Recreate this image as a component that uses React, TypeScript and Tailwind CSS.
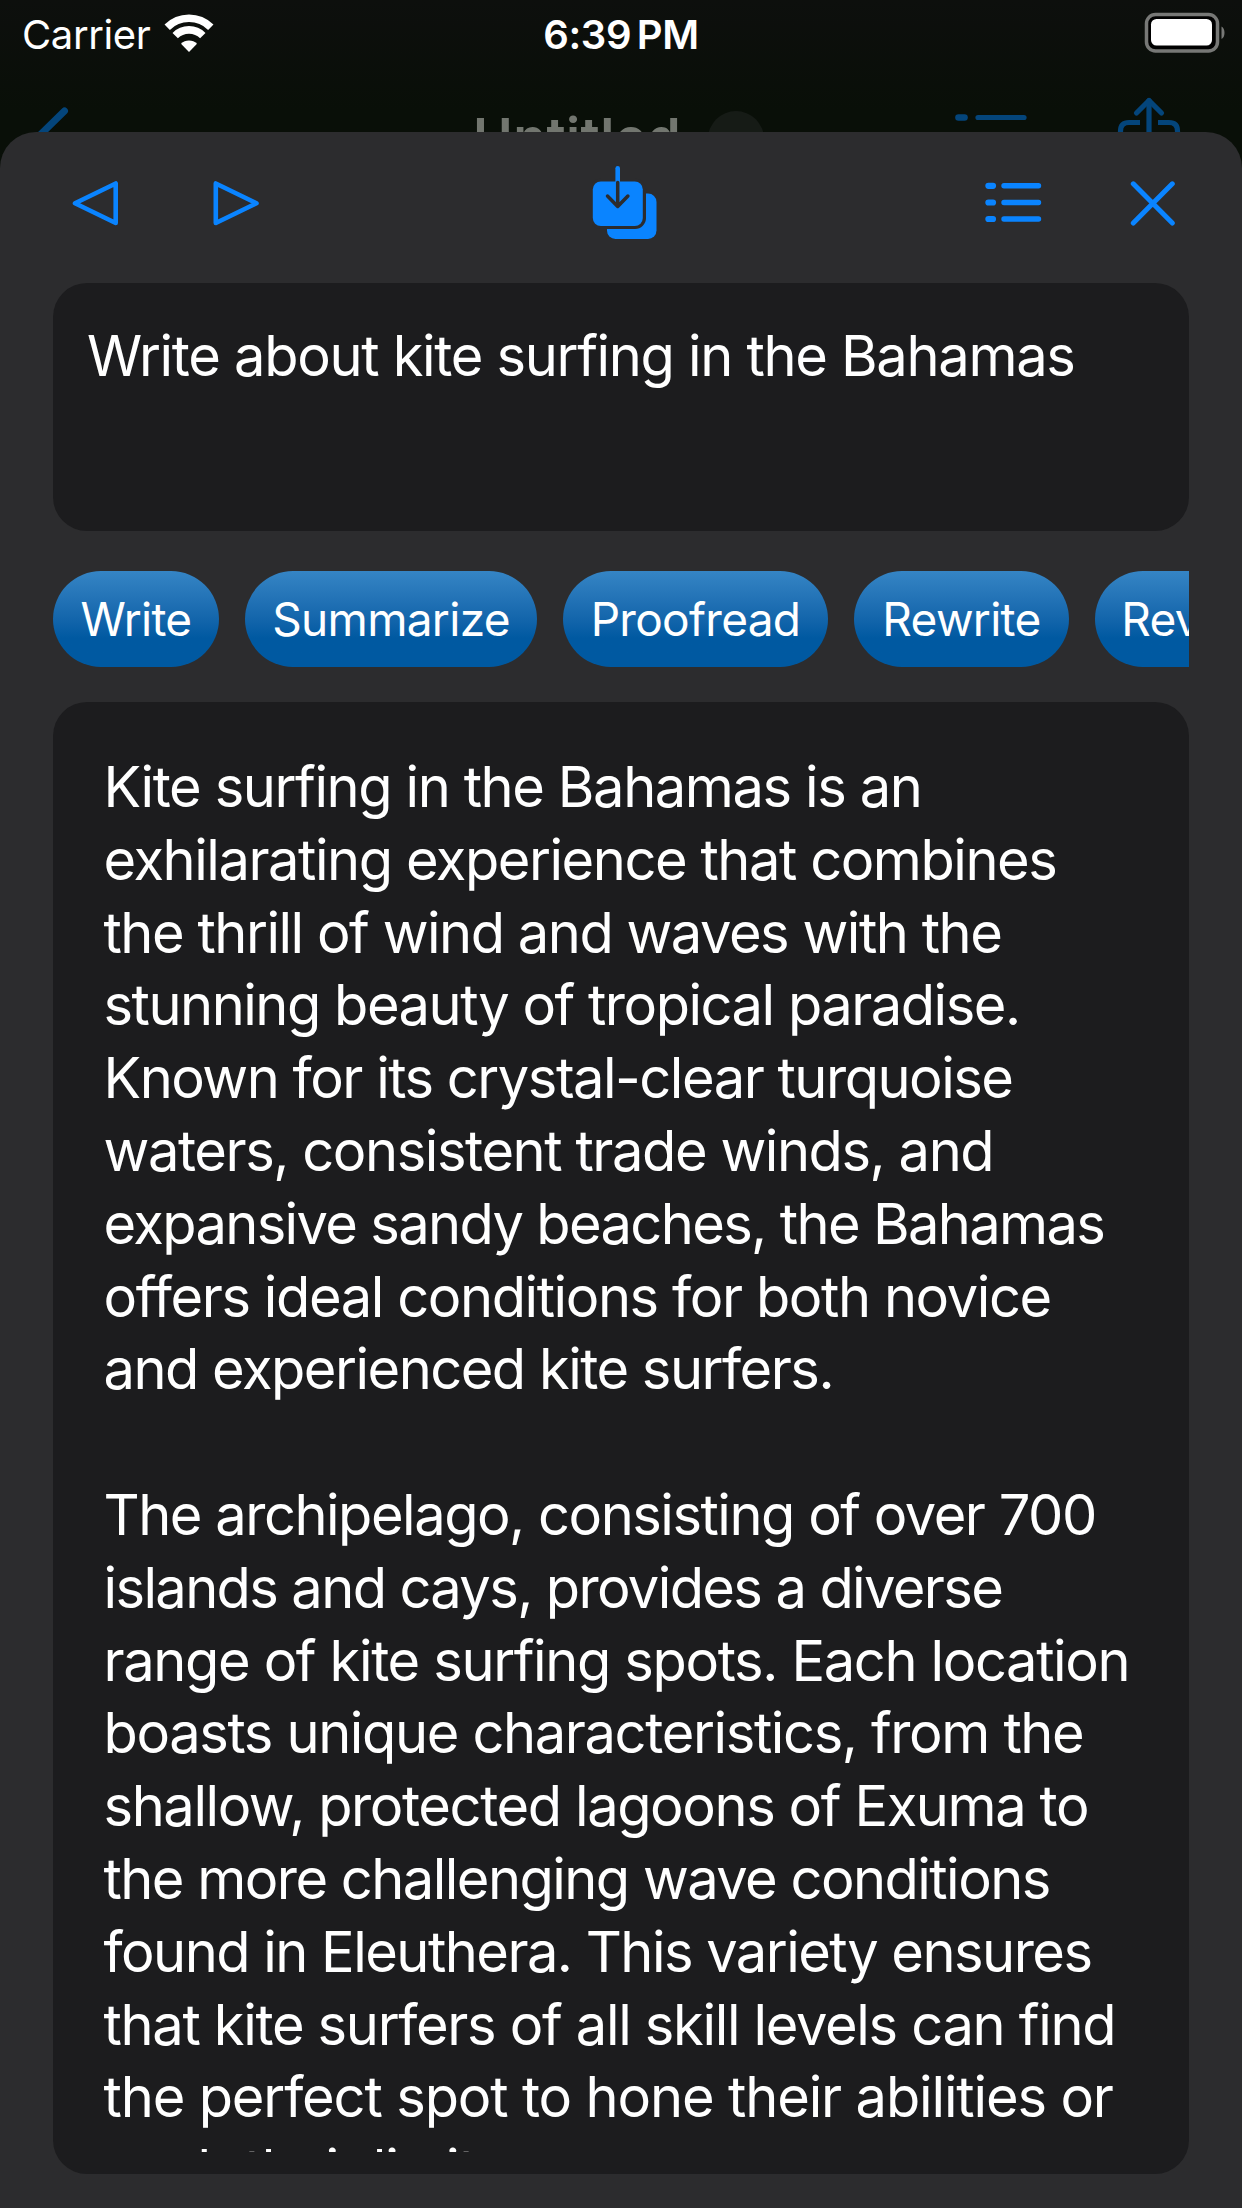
const actions = [
  { label: "Write", width: "w-[166px]" },
  { label: "Summarize", width: "w-[292px]" },
  { label: "Proofread", width: "w-[265px]" },
  { label: "Rewrite", width: "w-[215px]" },
  { label: "Review", width: "w-[204px]" },
]

const paragraphs = [
  [
    { text: "Kite surfing in the Bahamas is an", tracking: "tracking-[-1.41px]" },
    { text: "exhilarating experience that combines", tracking: "tracking-[-1.45px]" },
    { text: "the thrill of wind and waves with the", tracking: "tracking-[-1.47px]" },
    { text: "stunning beauty of tropical paradise.", tracking: "tracking-[-1.48px]" },
    { text: "Known for its crystal-clear turquoise", tracking: "tracking-[-1.48px]" },
    { text: "waters, consistent trade winds, and", tracking: "tracking-[-1.43px]" },
    { text: "expansive sandy beaches, the Bahamas", tracking: "tracking-[-1.64px]" },
    { text: "offers ideal conditions for both novice", tracking: "tracking-[-1.41px]" },
    { text: "and experienced kite surfers.", tracking: "tracking-[-1.5px]" },
  ],
  [
    { text: "The archipelago, consisting of over 700", tracking: "tracking-[-1.48px]" },
    { text: "islands and cays, provides a diverse", tracking: "tracking-[-1.62px]" },
    { text: "range of kite surfing spots. Each location", tracking: "tracking-[-1.37px]" },
    { text: "boasts unique characteristics, from the", tracking: "tracking-[-1.37px]" },
    { text: "shallow, protected lagoons of Exuma to", tracking: "tracking-[-1.41px]" },
    { text: "the more challenging wave conditions", tracking: "tracking-[-1.53px]" },
    { text: "found in Eleuthera. This variety ensures", tracking: "tracking-[-1.53px]" },
    { text: "that kite surfers of all skill levels can find", tracking: "tracking-[-1.33px]" },
    { text: "the perfect spot to hone their abilities or", tracking: "tracking-[-1.15px]" },
    { text: "push their limits.", tracking: "tracking-[-1px]" },
  ],
]

function StatusBar() {
  return (
    <div className="grid h-[76px] grid-cols-3 items-start pt-[11px] text-[40px] leading-[48px] text-white">
      <div className="flex pl-[22px]">
        <span className="tracking-[-0.4px]">Carrier</span>
        <svg className="ml-[14px] mt-[3px]" width="50" height="39" viewBox="0 0 50 39" fill="none">
          <path d="M3.2 13.2a31 31 0 0 1 43.6 0" stroke="white" strokeWidth="7.6" />
          <path d="M11.2 21.6a19.5 19.5 0 0 1 27.6 0" stroke="white" strokeWidth="7.6" />
          <path d="M25 38l-8-8.2a11.5 11.5 0 0 1 16 0z" fill="white" />
        </svg>
      </div>
      <span className="text-center font-semibold tracking-[-0.4px] [word-spacing:-4px]">6:39 PM</span>
      <div className="flex justify-end pr-[16px]">
        <svg className="mt-px" width="82" height="42" viewBox="0 0 82 42" fill="none">
          <rect x="2.5" y="2.5" width="71" height="36.5" rx="9" fill="black" stroke="#777876" strokeWidth="3.5" />
          <rect x="7" y="7" width="61" height="26.5" rx="5.5" fill="white" />
          <path d="M77.5 14.5c4 1.5 4 11 0 12.5z" fill="#777876" />
        </svg>
      </div>
    </div>
  )
}

// The document screen's bar, mostly covered by the sheet
function DocumentBar() {
  return (
    <div className="flex h-[56px] items-start overflow-hidden pl-[36px] text-[#04457b]">
      <svg className="mt-[30px] shrink-0" width="36" height="60" viewBox="0 0 36 60" fill="none">
        <path d="M28.5 5L3 30l25.5 25" stroke="currentColor" strokeWidth="7" strokeLinecap="round" strokeLinejoin="round" />
      </svg>
      <div className="ml-[401px] mt-[32px] w-[214px] shrink-0 text-[54px] leading-[60px] font-semibold tracking-[0.4px] text-[#72766f]">
        Untitled
      </div>
      <div className="ml-[21px] mt-[35px] size-[56px] shrink-0 rounded-full bg-[#161b16]" />
      <svg className="ml-[191px] mt-[36px] shrink-0" width="72" height="50" viewBox="0 0 72 50" fill="none" stroke="currentColor" strokeLinecap="round">
        <path d="M3.5 5.5h6" strokeWidth="6.6" />
        <path d="M23 5.5h46" strokeWidth="5.2" />
      </svg>
      <svg className="ml-[88px] mt-[18px] shrink-0" width="68" height="70" viewBox="0 0 68 70" fill="none" stroke="currentColor" strokeWidth="5.2" strokeLinecap="round" strokeLinejoin="round">
        <path d="M34 6.5v45" />
        <path d="M21.5 19L34 6.5 46.5 19" />
        <path d="M25 28.5H14q-8.5 0-8.5 8.5v20M43 28.5h11q8.5 0 8.5 8.5v20" strokeLinecap="butt" />
      </svg>
    </div>
  )
}

function Toolbar() {
  return (
    <div className="flex h-[150px] items-start pl-[72px] pt-[32px] text-[#0a84ff]">
      <button className="mt-[16px]">
        <svg width="48" height="46" viewBox="0 0 48 46" fill="none">
          <path d="M3 23.2L43.7 3.5v39.5z" stroke="currentColor" strokeWidth="4.6" strokeLinejoin="round" />
        </svg>
      </button>
      <button className="ml-[92px] mt-[16px]">
        <svg width="48" height="46" viewBox="0 0 48 46" fill="none">
          <path d="M44.5 23.2L3.8 3.5v39.5z" stroke="currentColor" strokeWidth="4.6" strokeLinejoin="round" />
        </svg>
      </button>
      <button className="ml-[332px]">
        <svg width="66" height="76" viewBox="0 0 66 76" fill="none">
          <rect x="15" y="29.5" width="49.5" height="45.5" rx="8.5" fill="currentColor" />
          <rect x="-2" y="14.5" width="56" height="50.5" rx="11" fill="#2c2c2e" />
          <rect x="0.8" y="17.5" width="50" height="44.5" rx="8" fill="currentColor" />
          <path d="M25.7 4.3v14" stroke="currentColor" strokeWidth="4.6" strokeLinecap="round" />
          <path d="M25.7 18.5v24M15.5 32l10.2 10.5L35.9 32" stroke="#2c2c2e" strokeWidth="3.5" strokeLinecap="round" strokeLinejoin="round" />
        </svg>
      </button>
      <button className="ml-[326px] mt-[16px]">
        <svg width="58" height="46" viewBox="0 0 58 46" fill="none" stroke="currentColor" strokeLinecap="round">
          <path d="M4.4 5.8h4.6M4.4 22.5h4.6M4.4 39h4.6" strokeWidth="6.2" />
          <path d="M20 5.8h34.5M20 22.5h34.5M20 39h34.5" strokeWidth="5.4" />
        </svg>
      </button>
      <button className="ml-[88px] mt-[16px]">
        <svg width="46" height="46" viewBox="0 0 46 46" fill="none">
          <path d="M3.3 3.8l39 39.2M42.3 3.8l-39 39.2" stroke="currentColor" strokeWidth="5" strokeLinecap="round" />
        </svg>
      </button>
    </div>
  )
}

export default function App() {
  return (
    <div className="flex h-[2208px] w-[1242px] flex-col overflow-hidden bg-linear-to-b from-[#0d0f0d] to-[#090f08] to-[110px] font-['Inter',sans-serif]">
      <StatusBar />
      <DocumentBar />
      <main className="flex flex-1 flex-col rounded-t-[36px] bg-[#2c2c2e] px-[53px]">
        <div className="-mx-[53px]">
          <Toolbar />
        </div>
        <div className="mt-px h-[248px] rounded-[34px] bg-[#1c1c1e] pt-[37px] pl-[34px] text-[56px] leading-[73px] tracking-[-1.32px] whitespace-nowrap text-white">
          Write about kite surfing in the Bahamas
        </div>
        <div className="mt-[40px] flex gap-[26px] overflow-hidden">
          {actions.map((action) => (
            <button
              key={action.label}
              className={`h-[96px] shrink-0 rounded-[48px] bg-linear-to-b from-[#3585c5] via-[#0059a1] via-70% to-[#0059a1] text-[46px] tracking-[-0.7px] whitespace-nowrap text-white ${action.width}`}
            >
              {action.label}
            </button>
          ))}
        </div>
        <div className="mt-[35px] h-[1472px] rounded-[34px] bg-[#1c1c1e] pt-[49px]">
          <div className="h-[1401px] overflow-hidden pl-[50.5px] text-[56px] leading-[72.8px] whitespace-nowrap text-white">
            {paragraphs.map((lines, index) => (
              <p key={index} className="mb-[72.8px]">
                {lines.map((line) => (
                  <span key={line.text} className={`block ${line.tracking}`}>
                    {line.text}
                  </span>
                ))}
              </p>
            ))}
          </div>
        </div>
      </main>
    </div>
  )
}
